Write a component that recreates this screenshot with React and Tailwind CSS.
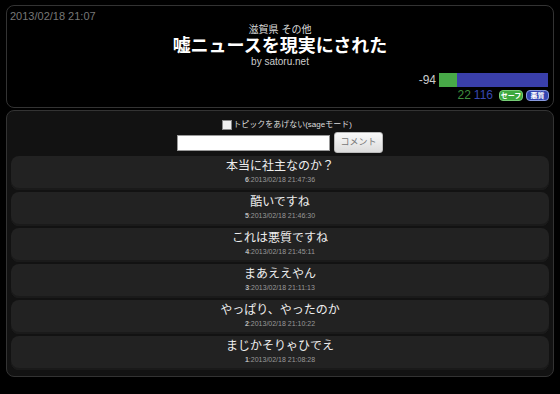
import React from "react";

const rows = [
  { t: "本当に社主なのか？", n: "6", d: "2013/02/18 21:47:36" },
  { t: "酷いですね", n: "5", d: "2013/02/18 21:46:30" },
  { t: "これは悪質ですね", n: "4", d: "2013/02/18 21:45:11" },
  { t: "まあええやん", n: "3", d: "2013/02/18 21:11:13" },
  { t: "やっぱり、やったのか", n: "2", d: "2013/02/18 21:10:22" },
  { t: "まじかそりゃひでえ", n: "1", d: "2013/02/18 21:08:28" },
];

export default function App() {
  return (
    <div className="w-[560px] h-[394px] bg-black px-[6px] pt-[5px] font-['Liberation_Sans','Noto_Sans_CJK_JP',sans-serif] overflow-hidden">
      <div className="h-[103px] rounded-[8px] border border-[#333] bg-black flex flex-col">
        <div className="text-[11px] leading-[14px] text-[#777] pl-[3px] pt-[3px]">2013/02/18 21:07</div>
        <div className="mt-[1px] text-[10px] leading-[12px] text-center text-[#ddd]">滋賀県 その他</div>
        <div className="text-[18px] leading-[20px] text-center text-white font-bold">嘘ニュースを現実にされた</div>
        <div className="text-[10px] leading-[12px] text-center text-[#ccc]">by satoru.net</div>
        <div className="mt-[5px] flex justify-end items-center pr-[5px] h-[14px]">
          <span className="text-[12px] leading-[14px] text-[#ccc] mr-[3px]">-94</span>
          <div className="w-[109px] h-[14px] flex bg-[#3a3faa]">
            <div className="w-[18px] h-full bg-[#48a948]"></div>
          </div>
        </div>
        <div className="mt-[3px] flex justify-end items-center pr-[4px] h-[11px] gap-[3px]">
          <span className="text-[12px] leading-[11px] text-[#3f8f3f]">22</span>
          <span className="text-[12px] leading-[11px] text-[#3848b0] mr-[3px]">116</span>
          <span className="shrink-0 whitespace-nowrap h-[11px] w-[24px] rounded-[4px] bg-[#3da83d] border border-[#7c7] text-white text-[7px] leading-[9px] font-bold flex items-center justify-center">セーフ</span>
          <span className="shrink-0 whitespace-nowrap h-[11px] w-[23px] rounded-[4px] bg-[#3344b0] border border-[#8899dd] text-white text-[7px] leading-[9px] font-bold flex items-center justify-center">悪質</span>
        </div>
      </div>
      <div className="mt-[2px] h-[267px] rounded-[8px] border border-[#333] bg-[#121212] px-[4px] pt-[7px] flex flex-col">
        <div className="h-[14px] flex items-center justify-center pl-[14px]">
          <span className="w-[10px] h-[10px] bg-[#eee] border border-[#888] mr-[1px]"></span>
          <span className="text-[8px] leading-[10px] text-[#ddd]">トピックをあげない(sageモード)</span>
        </div>
        <div className="h-[21px] flex items-center justify-center gap-[4px]">
          <div className="w-[153px] h-[16px] bg-white border border-[#999]"></div>
          <div className="w-[49px] h-[21px] rounded-[3px] border border-[#bbb] bg-gradient-to-b from-[#fafafa] to-[#dcdcdc] text-[9px] text-[#777] flex items-center justify-center">コメント</div>
        </div>
        <div className="mt-[3px] flex flex-col gap-[2px]">
          {rows.map((r) => (
            <div key={r.n} className="h-[34px] rounded-[8px] bg-[#222] shadow-[inset_0_-2px_0_#1a1a1a] pt-[2px] flex flex-col items-center">
              <div className="text-[12px] leading-[16px] text-[#eee]">{r.t}</div>
              <div className="mt-[1px] text-[7px] leading-[10px] text-[#999]">
                <span className="font-bold text-[#bbb]">{r.n}</span>:{r.d}
              </div>
            </div>
          ))}
        </div>
      </div>
    </div>
  );
}
